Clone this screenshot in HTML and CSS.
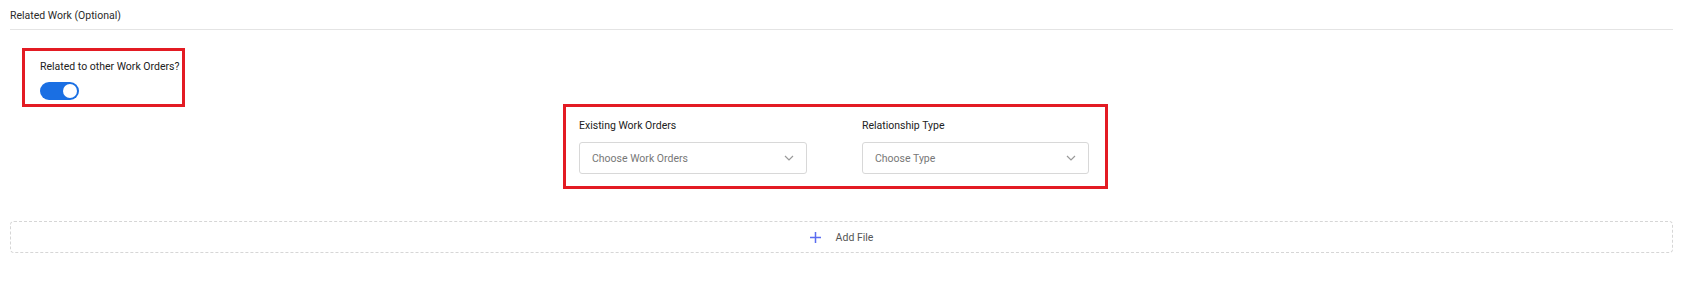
FILE: index.html
```html
<!DOCTYPE html>
<html lang="en">
<head>
    <meta charset="UTF-8">
    <meta name="viewport" content="width=device-width, initial-scale=1.0">
    <title>Related Work</title>
    <link rel="icon" href="data:,">
    <link rel="stylesheet" href="styles.css">
</head>
<body>
    <div class="section">
        <div class="section-title">Related Work (Optional)</div>

        <div class="toggle-field highlight">
            <label class="field-label" for="relatedToggle">Related to other Work Orders?</label>
            <button id="relatedToggle" class="switch is-on" type="button" aria-pressed="true">
                <span class="switch-knob"></span>
            </button>
        </div>

        <div class="relations">
            <div class="relations-box highlight">
                <div class="field">
                    <div class="field-label">Existing Work Orders</div>
                    <div class="select">
                        <span class="select-placeholder">Choose Work Orders</span>
                        <svg class="chevron" width="10" height="6" viewBox="0 0 10 6">
                            <path d="M1 1l4 4 4-4" fill="none" stroke="#9a9a9a" stroke-width="1.2"/>
                        </svg>
                    </div>
                </div>
                <div class="field">
                    <div class="field-label">Relationship Type</div>
                    <div class="select">
                        <span class="select-placeholder">Choose Type</span>
                        <svg class="chevron" width="10" height="6" viewBox="0 0 10 6">
                            <path d="M1 1l4 4 4-4" fill="none" stroke="#9a9a9a" stroke-width="1.2"/>
                        </svg>
                    </div>
                </div>
            </div>
        </div>

        <div class="add-file">
            <svg width="11" height="11" viewBox="0 0 11 11">
                <path d="M5.5 0v11M0 5.5h11" stroke="#5a6cf0" stroke-width="1.5"/>
            </svg>
            <span>Add File</span>
        </div>
    </div>
</body>
</html>
```

FILE: styles.css
```css
:root {
    --text-color: #2b2b2b;
    --muted-color: #777777;
    --line-color: #e4e4e4;
    --accent-color: #1a6fe3;
    --mark-color: #e31b23;
}

* {
    margin: 0;
    padding: 0;
    box-sizing: border-box;
}

body {
    font-family: Roboto, 'Liberation Sans', Arial, sans-serif;
    font-size: 10.5px;
    color: var(--text-color);
    background-color: #ffffff;
}

.section {
    padding: 0 8px 0 10px;
}

.section-title {
    line-height: 15px;
    padding: 8px 0 6px;
    border-bottom: 1px solid var(--line-color);
}

.highlight {
    border: 3px solid var(--mark-color);
}

.toggle-field {
    display: flex;
    flex-direction: column;
    align-items: flex-start;
    gap: 8px;
    width: max-content;
    margin: 18px 0 0 12px;
    padding: 9px 3px 4px 15px;
}

.field-label {
    display: block;
    line-height: 14px;
    color: #222222;
}

.switch {
    position: relative;
    width: 39px;
    height: 18px;
    border: none;
    border-radius: 9px;
    background-color: #c4c4c4;
    cursor: pointer;
}

.switch.is-on {
    background-color: var(--accent-color);
}

.switch-knob {
    position: absolute;
    top: 2px;
    left: 2px;
    width: 14px;
    height: 14px;
    border-radius: 50%;
    background-color: #ffffff;
}

.switch.is-on .switch-knob {
    left: 23px;
}

.relations {
    display: grid;
    grid-template-columns: 553px auto;
    margin-top: -3px;
}

.relations-box {
    grid-column: 2;
    justify-self: start;
    display: grid;
    grid-template-columns: 228px 227px;
    column-gap: 55px;
    padding: 12px 16px 12px 13px;
}

.field {
    display: flex;
    flex-direction: column;
    gap: 9px;
}

.select {
    display: flex;
    align-items: center;
    justify-content: space-between;
    height: 32px;
    padding: 0 12px 0 12px;
    border: 1px solid #d8d8d8;
    border-radius: 3px;
    cursor: pointer;
}

.select-placeholder {
    color: var(--muted-color);
}

.chevron {
    display: block;
}

.add-file {
    display: flex;
    align-items: center;
    justify-content: center;
    gap: 15px;
    height: 32px;
    margin-top: 32px;
    border: 1px dashed #d6d6d6;
    border-radius: 4px;
    color: #555555;
    cursor: pointer;
}

.add-file svg {
    display: block;
}
```
